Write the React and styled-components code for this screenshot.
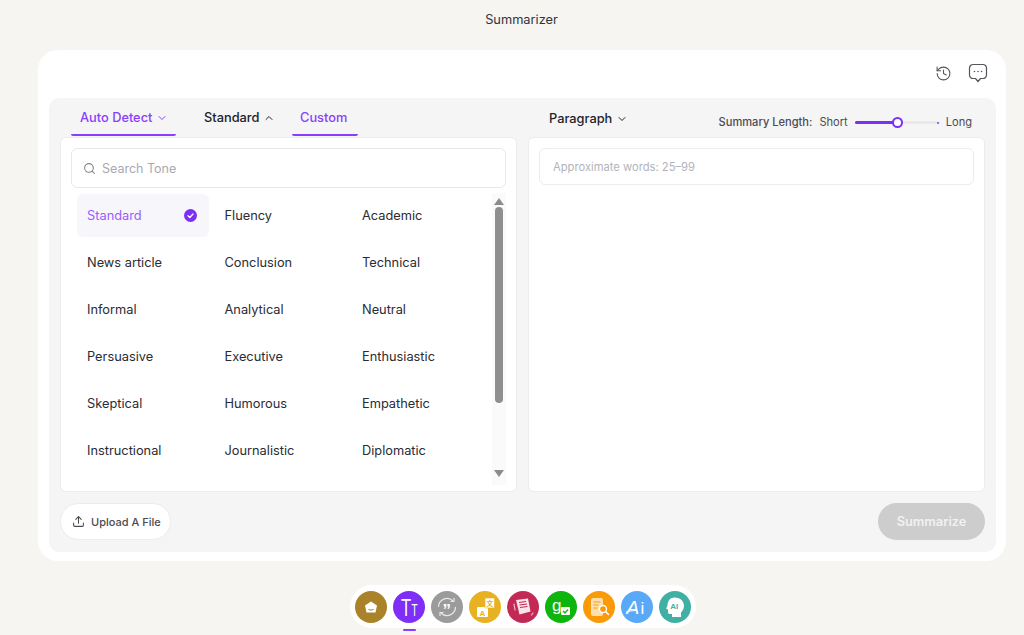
import React from "react";
import styled, {createGlobalStyle} from "styled-components";
import {ChevronDown, ChevronUp, Search, Upload, History} from "lucide-react";

const GlobalStyle = createGlobalStyle`
  html, body {
    margin: 0;
    background: #f6f5f1;
    font-family: "Inter", "Open Sans", sans-serif;
    color: #2b2b33;
  }
  * { box-sizing: border-box; }
`

const Page = styled.div`
  width: 1024px;
  height: 635px;
  overflow: hidden;
  display: flex;
  flex-direction: column;
`

const Title = styled.div`
  height: 50px;
  padding: 12px 0 0 19px;
  text-align: center;
  font-size: 12.8px;
  line-height: 16px;
  color: #33333a;
`

const Card = styled.div`
  width: 968px;
  height: 511px;
  margin-left: 38px;
  padding: 0 10px 9px 11px;
  background: #fff;
  border-radius: 20px;
  display: flex;
  flex-direction: column;
`

const TopIcons = styled.div`
  height: 48px;
  padding: 13px 8px 0 0;
  display: flex;
  justify-content: flex-end;
  gap: 15px;
  color: #55555c;
`

const IconSlot = styled.div`
  width: 20px;
  height: 21px;
  display: flex;
  align-items: center;
  justify-content: center;
`

const Workspace = styled.div`
  flex: 1;
  padding: 0 11px 12px;
  background: #f5f5f5;
  border-radius: 10px;
  display: flex;
  flex-direction: column;
`

const Columns = styled.div`
  display: grid;
  grid-template-columns: 457px 457px;
  gap: 11px;
`

const Column = styled.div`
  display: flex;
  flex-direction: column;
`

const TabRow = styled.div`
  height: 39px;
  padding-bottom: 1px;
  display: flex;
  align-items: flex-end;
`

const Tab = styled.div`
  height: 37px;
  margin-left: ${p => p.$offset || 0}px;
  width: ${p => p.$width}px;
  padding: 11px 0 0 ${p => p.$pad}px;
  display: flex;
  align-items: flex-start;
  gap: 4px;
  font-size: 12.8px;
  line-height: 15px;
  font-weight: 500;
  color: ${p => p.$active ? "#8a3ffc" : "#232329"};
  border-bottom: 2px solid ${p => p.$active ? "#8a3ffc" : "transparent"};
  border-radius: 0 0 2px 2px;
  svg { margin-top: 2px; }
`

const Panel = styled.div`
  height: 355px;
  background: #fff;
  border: 1px solid #ececec;
  border-radius: 6px;
  padding: 10px 10px;
`

const SearchBox = styled.div`
  width: 435px;
  height: 40px;
  padding-left: 11px;
  border: 1px solid #e9e9e9;
  border-radius: 6px;
  display: flex;
  align-items: center;
  gap: 6px;
  font-size: 12.5px;
  color: #a9a9b2;
`

const ToneArea = styled.div`
  height: 292px;
  margin-top: 5px;
  display: flex;
  justify-content: space-between;
  width: 435px;
`

const ToneGrid = styled.div`
  padding: 1px 0 0 6px;
  display: grid;
  grid-template-columns: 132px 132px 132px;
  grid-auto-rows: 43px;
  column-gap: 5.500px;
  row-gap: 4px;
`

const Tone = styled.div`
  padding: 0 12px 0 10px;
  display: flex;
  align-items: center;
  justify-content: space-between;
  border-radius: 6px;
  font-size: 12.8px;
  color: ${p => p.$active ? "#9a5cff" : "#2b2b33"};
  background: ${p => p.$active ? "#f7f6fb" : "transparent"};
`

const Scroll = styled.div`
  width: 14px;
  background: #fafafa;
  display: flex;
  flex-direction: column;
  align-items: center;
  padding-top: 5px;
`

const ArrowUp = styled.div`
  width: 0;
  height: 0;
  border-left: 5px solid transparent;
  border-right: 5px solid transparent;
  border-bottom: 7px solid #8c8c8c;
`

const ArrowDown = styled.div`
  width: 0;
  height: 0;
  margin-top: 67px;
  border-left: 5px solid transparent;
  border-right: 5px solid transparent;
  border-top: 7px solid #8c8c8c;
`

const Thumb = styled.div`
  width: 8px;
  height: 196px;
  margin-top: 2px;
  background: #8f8f8f;
  border-radius: 4px;
`

const RightHead = styled.div`
  height: 39px;
  padding: 13px 0 0 21px;
  display: flex;
  justify-content: space-between;
`

const Dropdown = styled.div`
  display: flex;
  align-items: flex-start;
  gap: 4px;
  font-size: 12.8px;
  line-height: 15px;
  font-weight: 500;
  color: #232329;
  svg { margin-top: 2px; }
`

const LengthControl = styled.div`
  padding: 4px 13px 0 0;
  display: flex;
  align-items: flex-start;
  font-size: 11.100px;
  line-height: 14px;
  color: #4b4b52;
`

const LengthLabel = styled.span`
  margin-right: 7px;
  font-weight: 500;
`

const SliderTrack = styled.div`
  position: relative;
  width: 85px;
  height: 3px;
  margin: 6px 6px 0 7px;
  background: #e9e9e9;
  border-radius: 2px;
`

const SliderFill = styled.div`
  height: 3px;
  background: #7b2ff7;
  border-radius: 2px;
`

const SliderThumb = styled.div`
  position: absolute;
  top: -4px;
  width: 11px;
  height: 11px;
  margin-left: -5px;
  background: #fff;
  border: 2.5px solid #7b2ff7;
  border-radius: 50%;
`

const SliderEnd = styled.div`
  position: absolute;
  top: 1px;
  right: 1px;
  width: 2px;
  height: 2px;
  background: #8a3ffc;
  border-radius: 50%;
`

const WordsBox = styled.div`
  width: 435px;
  height: 37px;
  padding-left: 13px;
  border: 1px solid #ececec;
  border-radius: 6px;
  display: flex;
  align-items: center;
  font-size: 11.2px;
  color: #b3b3ba;
`

const Footer = styled.div`
  margin-top: 11px;
  display: flex;
  justify-content: space-between;
`

const UploadButton = styled.div`
  width: 111px;
  height: 37px;
  padding-left: 11px;
  background: #fff;
  border: 1px solid #ececec;
  border-radius: 19px;
  display: flex;
  align-items: center;
  gap: 6px;
  font-size: 11px;
  font-weight: 500;
  color: #4b4b52;
`

const SummarizeButton = styled.div`
  width: 107px;
  height: 37px;
  background: #cdcdcd;
  border-radius: 19px;
  display: flex;
  align-items: center;
  justify-content: center;
  font-size: 12.8px;
  font-weight: 600;
  color: #f1f1f1;
`

const DockWrap = styled.div`
  margin-top: 24px;
  display: flex;
  justify-content: center;
  padding-left: 21px;
`

const Dock = styled.div`
  height: 43px;
  padding: 0 5px;
  background: #fff;
  border-radius: 22px;
  display: flex;
  align-items: center;
  gap: 6px;
`

const DockItem = styled.div`
  position: relative;
  width: 32px;
  height: 32px;
  border-radius: 50%;
  background: ${p => p.$color};
  display: flex;
  align-items: center;
  justify-content: center;
  ${p => p.$current && `
    &::after {
      content: "";
      position: absolute;
      left: 10px;
      bottom: -8px;
      width: 13px;
      height: 2px;
      background: #8a3ffc;
      border-radius: 1px;
    }
  `}
`

const CheckBadge = () => (
    <svg width="13" height="13" viewBox="0 0 13 13">
        <circle cx="6.5" cy="6.5" r="6.5" fill="#7b2ff7"/>
        <path d="M4 6.8l1.8 1.7L9 5" fill="none" stroke="#fff" strokeWidth="1.3" strokeLinecap="round" strokeLinejoin="round"/>
    </svg>
)

const ChatIcon = () => (
    <svg width="20" height="21" viewBox="0 0 20 21" fill="none" stroke="currentColor" strokeWidth="1.2" strokeLinejoin="round">
        <path d="M5 1.500h10a3.500 3.500 0 0 1 3.500 3.500v7a3.500 3.500 0 0 1-3.500 3.500h-2.500L10 18.500l-2.500-3H5A3.500 3.500 0 0 1 1.500 12V5A3.500 3.500 0 0 1 5 1.500z"/>
        <path d="M6.500 8.500h.01M10 8.500h.01M13.500 8.500h.01" strokeWidth="1.600" strokeLinecap="round"/>
    </svg>
)

const DockGlyph = ({children}) => (
    <svg width="32" height="32" viewBox="0 0 32 32" fontFamily="Liberation Sans, sans-serif">{children}</svg>
)

const dockIcons = [
    {color: "#a9822a", glyph: (
        <DockGlyph>
            <path d="M16 10.500l6 4-1.500 7h-9l-1.500-7z" fill="#fff"/>
            <path d="M13.500 18.500q2.500 1.200 5 0" stroke="#a9822a" strokeWidth="1" fill="none"/>
        </DockGlyph>
    )},
    {color: "#7f2ff5", current: true, glyph: (
        <DockGlyph>
            <text transform="translate(8 25) scale(.72 1)" fontSize="23" fill="#fff">T</text>
            <text transform="translate(18.500 25) scale(.62 1)" fontSize="16" fill="#fff">T</text>
        </DockGlyph>
    )},
    {color: "#9b9b9b", glyph: (
        <DockGlyph>
            <path d="M7.500 16a8.500 8.500 0 0 1 14.500-6M24.500 16a8.500 8.500 0 0 1-14.500 6" fill="none" stroke="#e8e8e8" strokeWidth="1.200"/>
            <path d="M23 7v3.500h-3.500M9 25v-3.500h3.500" fill="none" stroke="#e8e8e8" strokeWidth="1.200"/>
            <text x="11.500" y="25" fontSize="17" fontWeight="700" fill="#fff">”</text>
        </DockGlyph>
    )},
    {color: "#e8b122", glyph: (
        <DockGlyph>
            <rect x="8" y="16" width="11" height="10" rx="1" fill="#fff"/>
            <rect x="16" y="7" width="9.500" height="10" rx="1" fill="#fff" stroke="#e8b122" strokeWidth=".6"/>
            <text x="10.500" y="24.500" fontSize="8" fontWeight="700" fill="#e8b122">A</text>
            <text x="17.200" y="15" fontSize="7" fontWeight="700" fontFamily="Noto Sans CJK SC, sans-serif" fill="#e8b122">文</text>
        </DockGlyph>
    )},
    {color: "#c22a55", glyph: (
        <DockGlyph>
            <path d="M9 9l12-1.500 2.500 13-11 3z" fill="#fbe3ea"/>
            <path d="M12 11.500l7-1M12.500 14l7.500-1M13 16.500l7.500-1" stroke="#c22a55" strokeWidth="1"/>
            <path d="M7 13l1 6M24.500 24l1.500-2" stroke="#f3b8c8" strokeWidth="1.200" strokeLinecap="round"/>
        </DockGlyph>
    )},
    {color: "#0db50d", glyph: (
        <DockGlyph>
            <text x="7" y="20" fontSize="17" fill="#fff">g</text>
            <rect x="16" y="16" width="9" height="8" rx="1" fill="#fff"/>
            <path d="M18 20l2 2 3-3.500" fill="none" stroke="#0db50d" strokeWidth="1.300"/>
        </DockGlyph>
    )},
    {color: "#fb9a09", glyph: (
        <DockGlyph>
            <rect x="8" y="7" width="12" height="18" rx="2" fill="#fde0b0"/>
            <path d="M10.500 11h7M10.500 14h5M10.500 17h4" stroke="#fb9a09" strokeWidth="1.200"/>
            <circle cx="20" cy="18" r="3.500" fill="#fb9a09" stroke="#fff" strokeWidth="1.300"/>
            <path d="M22.500 20.500l3 3" stroke="#fff" strokeWidth="1.500" strokeLinecap="round"/>
        </DockGlyph>
    )},
    {color: "#5aa9f8", glyph: (
        <DockGlyph>
            <text x="5.500" y="23" fontSize="19" fontStyle="italic" fill="#fff">A</text>
            <text x="19.500" y="23" fontSize="17" fill="#fff">i</text>
            <path d="M5 21q5-1.500 10-1.500" fill="none" stroke="#fff" strokeWidth="1"/>
        </DockGlyph>
    )},
    {color: "#40b0a4", glyph: (
        <DockGlyph>
            <path d="M16 6.500c5.500 0 9 3.800 9 8.500 0 3.500-2 5.200-3 6.500V26h-9v-3h-2.500c-1 0-1.500-1-1.500-2v-2.500L7 17.500l1.500-2.800C8.500 10 11 6.500 16 6.500z" fill="#fff"/>
            <text x="11.200" y="17.500" fontSize="8" fontWeight="700" fill="#40b0a4">AI</text>
        </DockGlyph>
    )},
];

const tones = [
    "Standard", "Fluency", "Academic",
    "News article", "Conclusion", "Technical",
    "Informal", "Analytical", "Neutral",
    "Persuasive", "Executive", "Enthusiastic",
    "Skeptical", "Humorous", "Empathetic",
    "Instructional", "Journalistic", "Diplomatic",
];

export default function App() {
    return (
        <Page>
            <GlobalStyle/>
            <Title>Summarizer</Title>
            <Card>
                <TopIcons>
                    <IconSlot><History size={17} strokeWidth={1.5}/></IconSlot>
                    <IconSlot><ChatIcon/></IconSlot>
                </TopIcons>
                <Workspace>
                    <Columns>
                        <Column>
                            <TabRow>
                                <Tab $active $width={105} $pad={9} $offset={11}>
                                    Auto Detect <ChevronDown size={12}/>
                                </Tab>
                                <Tab $width={116} $pad={28}>
                                    Standard <ChevronUp size={12}/>
                                </Tab>
                                <Tab $active $width={66} $pad={8}>Custom</Tab>
                            </TabRow>
                            <Panel>
                                <SearchBox>
                                    <Search size={13} color="#85858c"/>
                                    Search Tone
                                </SearchBox>
                                <ToneArea>
                                    <ToneGrid>
                                        {tones.map((tone, idx) => (
                                            <Tone key={tone} $active={idx === 0}>
                                                {tone}
                                                {idx === 0 && <CheckBadge/>}
                                            </Tone>
                                        ))}
                                    </ToneGrid>
                                    <Scroll>
                                        <ArrowUp/>
                                        <Thumb/>
                                        <ArrowDown/>
                                    </Scroll>
                                </ToneArea>
                            </Panel>
                        </Column>
                        <Column>
                            <RightHead>
                                <Dropdown>Paragraph <ChevronDown size={12}/></Dropdown>
                                <LengthControl>
                                    <LengthLabel>Summary Length:</LengthLabel>
                                    Short
                                    <SliderTrack>
                                        <SliderFill style={{width: "50%"}}/>
                                        <SliderThumb style={{left: "50%"}}/>
                                        <SliderEnd/>
                                    </SliderTrack>
                                    Long
                                </LengthControl>
                            </RightHead>
                            <Panel>
                                <WordsBox>Approximate words: 25–99</WordsBox>
                            </Panel>
                        </Column>
                    </Columns>
                    <Footer>
                        <UploadButton><Upload size={13}/>Upload A File</UploadButton>
                        <SummarizeButton>Summarize</SummarizeButton>
                    </Footer>
                </Workspace>
            </Card>
            <DockWrap>
                <Dock>
                    {dockIcons.map((icon, idx) => (
                        <DockItem key={idx} $color={icon.color} $current={icon.current}>{icon.glyph}</DockItem>
                    ))}
                </Dock>
            </DockWrap>
        </Page>
    );
}
